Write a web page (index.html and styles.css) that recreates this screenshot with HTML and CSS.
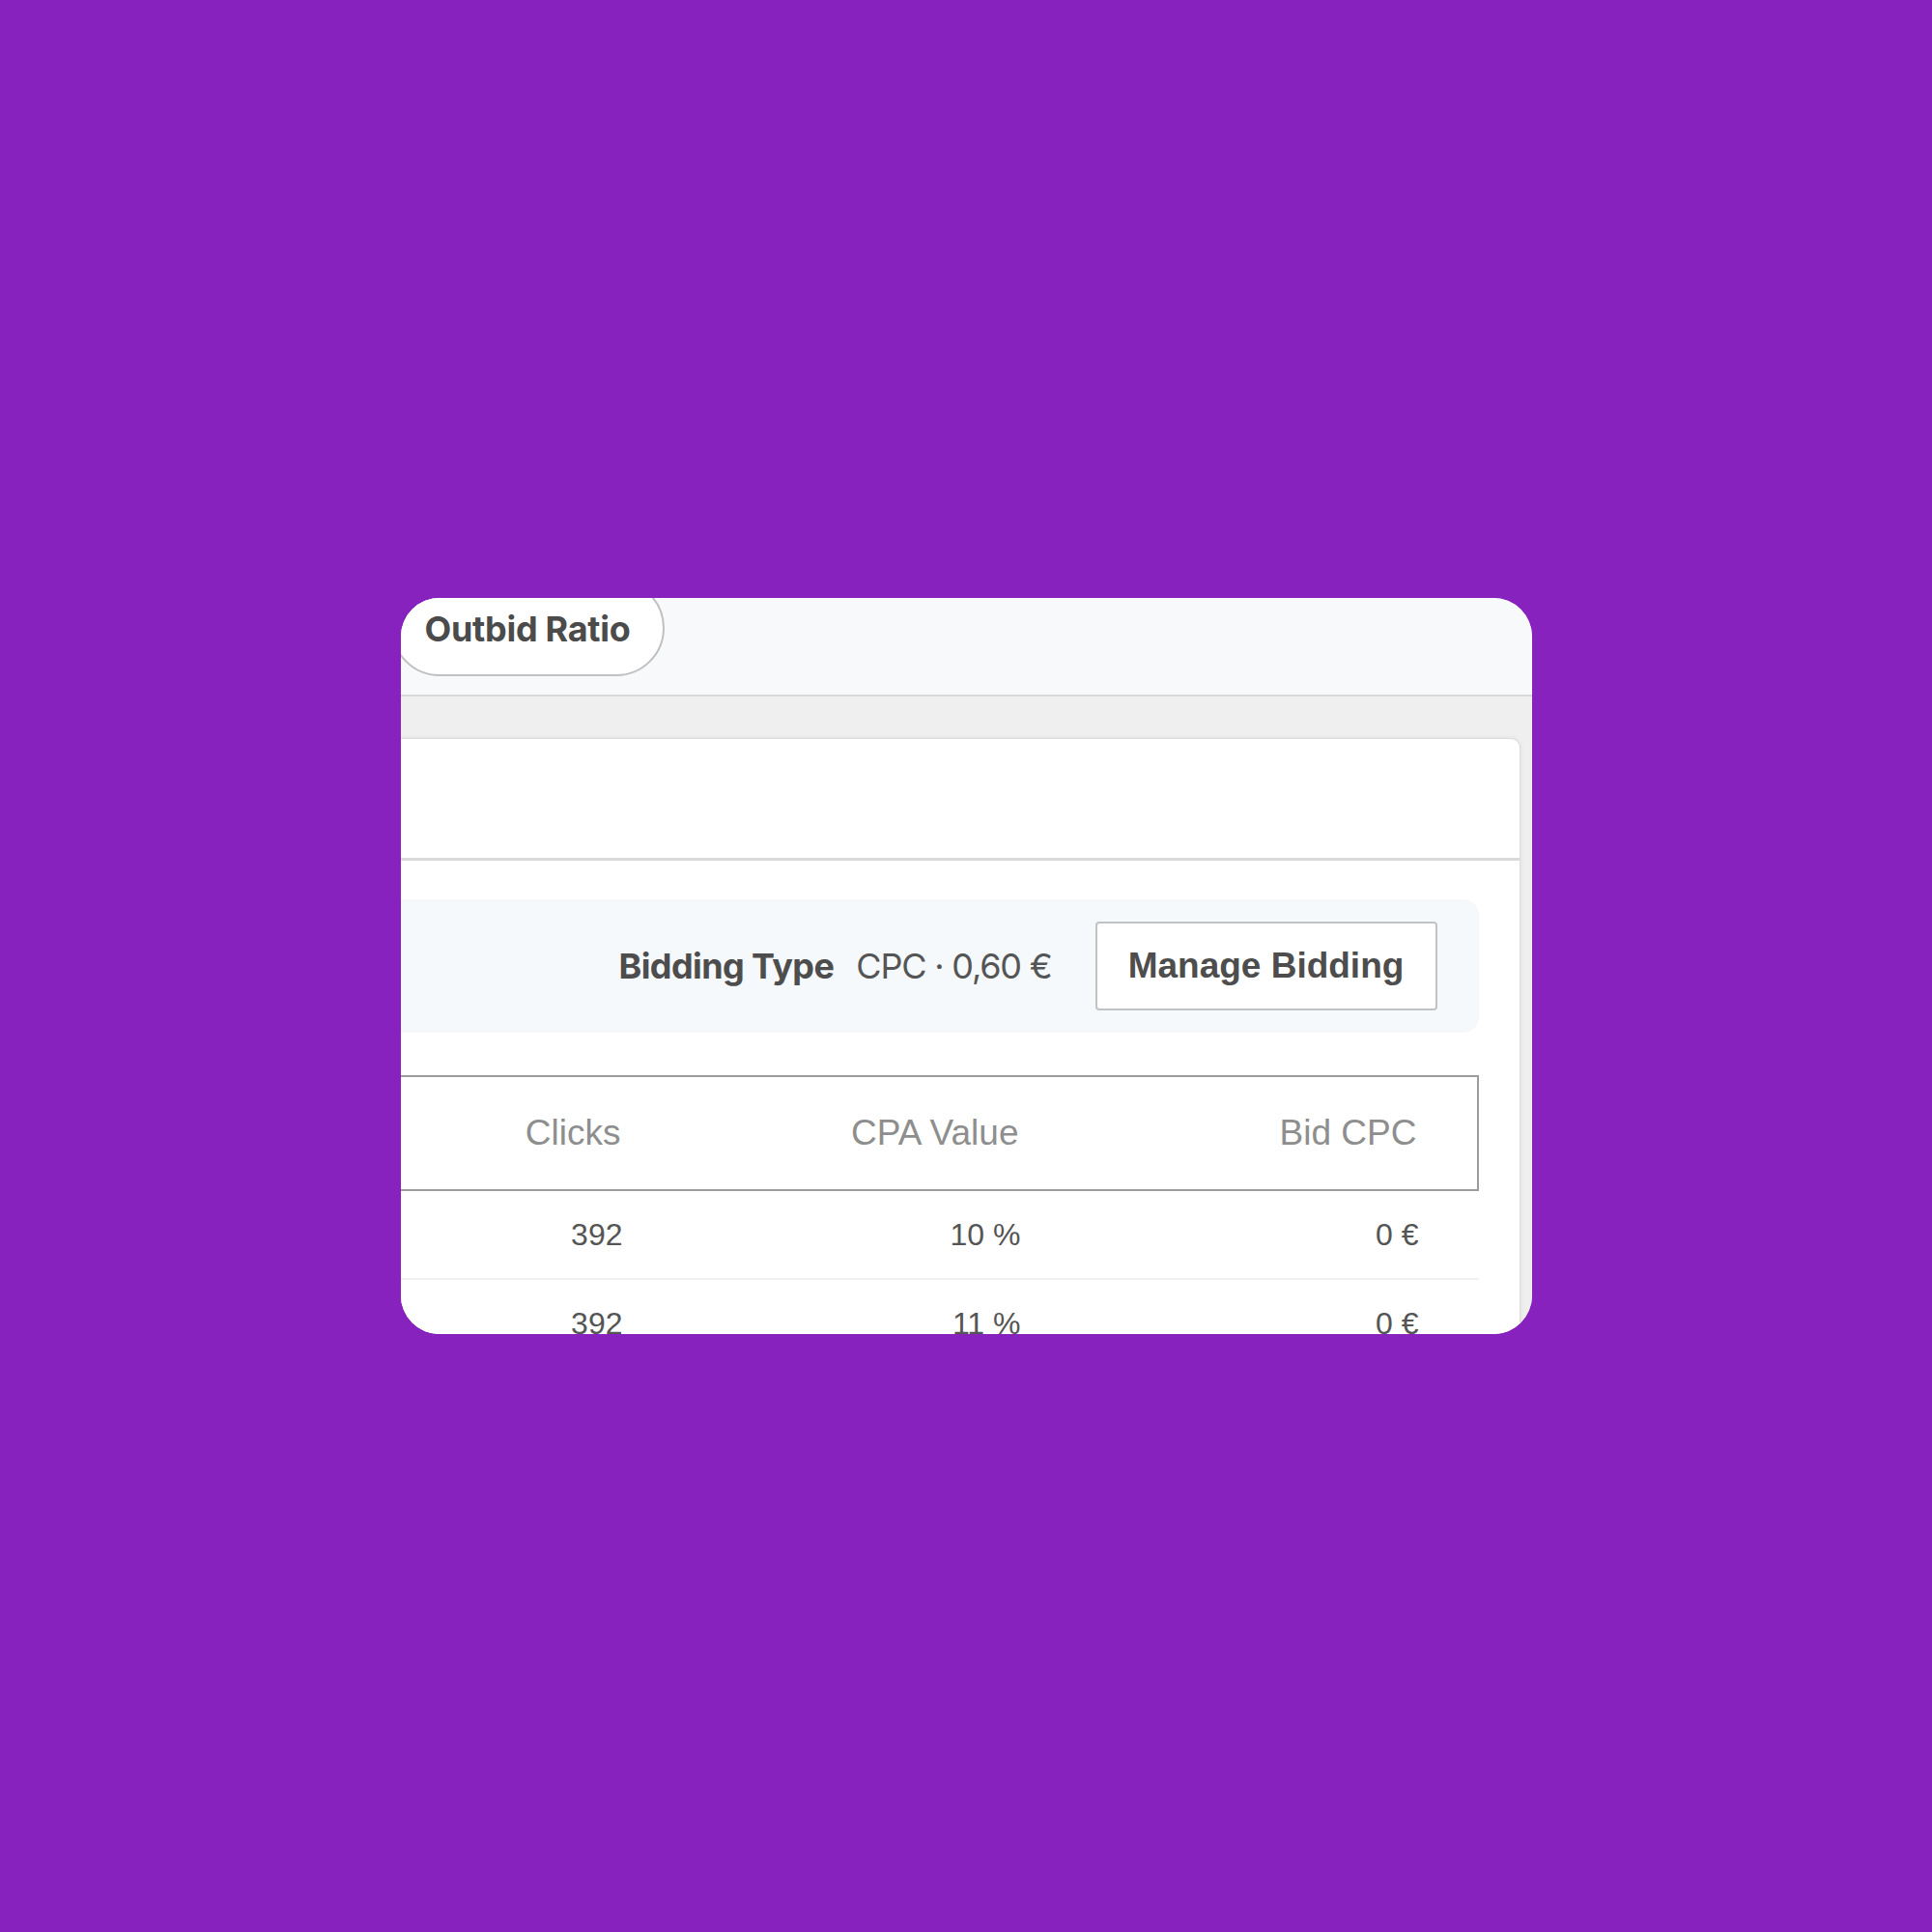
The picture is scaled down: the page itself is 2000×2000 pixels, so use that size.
FILE: index.html
```html
<!DOCTYPE html>
<html>
<head>
<meta charset="utf-8">
<link rel="stylesheet" href="styles.css">
</head>
<body>
<div class="card">
  <div class="topbar">
    <div class="tab">Outbid Ratio</div>
  </div>
  <div class="stage">
    <div class="panel">
      <div class="panel-head"></div>
      <div class="panel-body">
        <div class="bidbar">
          <span class="bid-label">Bidding Type</span>
          <span class="bid-value">CPC · 0,60 €</span>
          <button class="btn">Manage Bidding</button>
        </div>
        <div class="table">
          <div class="thead">
            <div class="cell"></div>
            <div class="cell">Clicks</div>
            <div class="cell">CPA Value</div>
            <div class="cell">Bid CPC</div>
          </div>
          <div class="row">
            <div class="cell"></div>
            <div class="cell">392</div>
            <div class="cell">10 %</div>
            <div class="cell">0 €</div>
          </div>
          <div class="row">
            <div class="cell"></div>
            <div class="cell">392</div>
            <div class="cell">11 %</div>
            <div class="cell">0 €</div>
          </div>
        </div>
      </div>
    </div>
  </div>
</div>
</body>
</html>
```
FILE: styles.css
```css
html, body {
  margin: 0;
  padding: 0;
}
body {
  width: 2000px;
  height: 2000px;
  background: #8822be;
  display: flex;
  align-items: center;
  justify-content: center;
}
.card {
  width: 1171px;
  height: 762px;
  border-radius: 40px;
  overflow: hidden;
  display: flex;
  flex-direction: column;
  background: #efefef;
}
.topbar {
  height: 100px;
  flex-shrink: 0;
  background: #f7f9fb;
  border-bottom: 2px solid #d9d9d9;
}
.tab {
  box-sizing: border-box;
  margin: -19px 0 0 -10px;
  width: 283px;
  height: 100px;
  border: 2px solid #c0c0c0;
  border-radius: 50px;
  background: #fff;
  display: flex;
  align-items: center;
  justify-content: center;
  padding-top: 2px;
  font-family: Inter, "Liberation Sans", sans-serif;
  font-weight: 700;
  font-size: 36px;
  letter-spacing: -0.3px;
  color: #4b4b4b;
}
.stage {
  flex: 1;
  background: #efefef;
  padding: 43px 12px 0 0;
}
.panel {
  margin-left: -600px;
  background: #fff;
  border: 1px solid #dcdcdc;
  border-top-right-radius: 10px;
  box-shadow: 0 0 4px rgba(0, 0, 0, 0.08);
  height: 700px;
}
.panel-head {
  height: 123px;
  border-bottom: 3px solid #dadada;
}
.panel-body {
  padding: 40px 42px 0 42px;
}
.bidbar {
  box-sizing: border-box;
  height: 138px;
  border-radius: 16px;
  background: #f5f9fc;
  display: flex;
  align-items: center;
  justify-content: flex-end;
  padding-right: 43px;
}
.bid-label {
  font-family: Inter, "Liberation Sans", sans-serif;
  font-weight: 700;
  font-size: 36px;
  letter-spacing: -0.6px;
  color: #4d4d4d;
}
.bid-value {
  margin-left: 23px;
  font-family: Inter, "Liberation Sans", sans-serif;
  font-weight: 400;
  font-size: 36px;
  letter-spacing: -1.2px;
  color: #555;
}
.btn {
  margin-left: 45px;
  box-sizing: border-box;
  width: 354px;
  height: 92px;
  border: 2px solid #c2c2c2;
  border-radius: 4px;
  background: #fff;
  font-family: "Liberation Sans", Arial, sans-serif;
  font-weight: 700;
  font-size: 37px;
  color: #4d4d4d;
  padding: 0;
}
.table {
  margin-top: 44px;
  font-family: "Liberation Sans", Arial, sans-serif;
}
.thead, .row {
  display: grid;
  grid-template-columns: 1fr 412px 412px 412px;
  align-items: center;
}
.thead {
  box-sizing: border-box;
  height: 120px;
  border: 2px solid #9c9c9c;
  font-size: 37px;
  color: #8e8e8e;
}
.row {
  box-sizing: border-box;
  height: 92px;
  border-bottom: 2px solid #f1f1f1;
  font-size: 32px;
  color: #555;
}
.cell {
  text-align: right;
  padding-right: 62px;
}
```
